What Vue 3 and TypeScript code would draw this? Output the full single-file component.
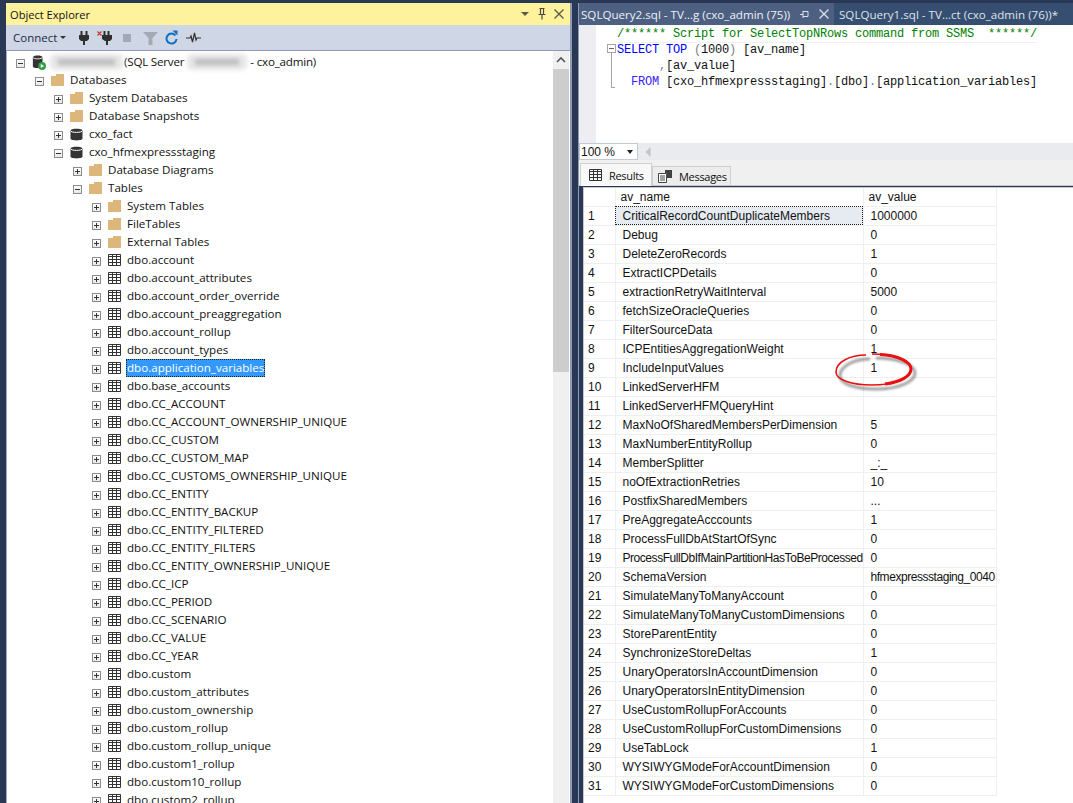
<script setup lang="ts">
type TreeKind = 'server' | 'folder' | 'db' | 'table'
interface TreeRow {
  label: string
  depth: number
  kind: TreeKind
  open?: boolean
  selected?: boolean
}

const folderRows: TreeRow[] = [
  { label: 'Databases', depth: 1, kind: 'folder', open: true },
  { label: 'System Databases', depth: 2, kind: 'folder' },
  { label: 'Database Snapshots', depth: 2, kind: 'folder' },
  { label: 'cxo_fact', depth: 2, kind: 'db' },
  { label: 'cxo_hfmexpressstaging', depth: 2, kind: 'db', open: true },
  { label: 'Database Diagrams', depth: 3, kind: 'folder' },
  { label: 'Tables', depth: 3, kind: 'folder', open: true },
  { label: 'System Tables', depth: 4, kind: 'folder' },
  { label: 'FileTables', depth: 4, kind: 'folder' },
  { label: 'External Tables', depth: 4, kind: 'folder' },
]

const tableNames = [
  'account', 'account_attributes', 'account_order_override', 'account_preaggregation',
  'account_rollup', 'account_types', 'application_variables', 'base_accounts',
  'CC_ACCOUNT', 'CC_ACCOUNT_OWNERSHIP_UNIQUE', 'CC_CUSTOM', 'CC_CUSTOM_MAP',
  'CC_CUSTOMS_OWNERSHIP_UNIQUE', 'CC_ENTITY', 'CC_ENTITY_BACKUP', 'CC_ENTITY_FILTERED',
  'CC_ENTITY_FILTERS', 'CC_ENTITY_OWNERSHIP_UNIQUE', 'CC_ICP', 'CC_PERIOD', 'CC_SCENARIO',
  'CC_VALUE', 'CC_YEAR', 'custom', 'custom_attributes', 'custom_ownership', 'custom_rollup',
  'custom_rollup_unique', 'custom1_rollup', 'custom10_rollup', 'custom2_rollup',
]

const treeRows: TreeRow[] = [
  ...folderRows,
  ...tableNames.map((n) => ({
    label: 'dbo.' + n,
    depth: 4,
    kind: 'table' as TreeKind,
    selected: n === 'application_variables',
  })),
]

const comment = '/****** Script for SelectTopNRows command from SSMS  ******/'

const results: [string, string][] = [
  ['CriticalRecordCountDuplicateMembers', '1000000'],
  ['Debug', '0'],
  ['DeleteZeroRecords', '1'],
  ['ExtractICPDetails', '0'],
  ['extractionRetryWaitInterval', '5000'],
  ['fetchSizeOracleQueries', '0'],
  ['FilterSourceData', '0'],
  ['ICPEntitiesAggregationWeight', '1'],
  ['IncludeInputValues', '1'],
  ['LinkedServerHFM', ''],
  ['LinkedServerHFMQueryHint', ''],
  ['MaxNoOfSharedMembersPerDimension', '5'],
  ['MaxNumberEntityRollup', '0'],
  ['MemberSplitter', '_:_'],
  ['noOfExtractionRetries', '10'],
  ['PostfixSharedMembers', '...'],
  ['PreAggregateAcccounts', '1'],
  ['ProcessFullDbAtStartOfSync', '0'],
  ['ProcessFullDbIfMainPartitionHasToBeProcessed', '0'],
  ['SchemaVersion', 'hfmexpressstaging_0040'],
  ['SimulateManyToManyAccount', '0'],
  ['SimulateManyToManyCustomDimensions', '0'],
  ['StoreParentEntity', '0'],
  ['SynchronizeStoreDeltas', '1'],
  ['UnaryOperatorsInAccountDimension', '0'],
  ['UnaryOperatorsInEntityDimension', '0'],
  ['UseCustomRollupForAccounts', '0'],
  ['UseCustomRollupForCustomDimensions', '0'],
  ['UseTabLock', '1'],
  ['WYSIWYGModeForAccountDimension', '0'],
  ['WYSIWYGModeForCustomDimensions', '0'],
]
</script>

<template>
  <div class="app">
    <section class="explorer">
      <header class="pane-title">
        <span>Object Explorer</span>
        <span class="title-btns">
          <svg width="12" height="12" viewBox="0 0 12 12"><path d="M2 4h8L6 8z" fill="#5a5a4a" /></svg>
          <svg width="12" height="14" viewBox="0 0 12 14"><path d="M3.500 1.500h5M4.500 1.500v6M7.500 1.500v6M2.500 7.500h7M6 7.500v5" fill="none" stroke="#4a4a3e" stroke-width="1.200" /></svg>
          <svg width="12" height="12" viewBox="0 0 12 12"><path d="M1.500 1.500l9 9M10.500 1.500l-9 9" fill="none" stroke="#5a5a4a" stroke-width="1.400" /></svg>
        </span>
      </header>
      <div class="toolbar">
        <span class="connect">Connect<i class="caret"></i></span>
        <svg class="tb-plug" width="12" height="14" viewBox="0 0 12 14"><path d="M2.500 0H4.500V4H7.500V0H9.500V4H11V8L9 10H7V14H5V10H3L1 8V4H2.500z" fill="#2f2f2f" /></svg>
        <svg class="tb-xplug" width="16" height="14" viewBox="0 0 16 14"><path d="M.5.500l4 4M4.500.5l-4 4" stroke="#c0392b" stroke-width="1.100" /><path d="M6.500 0H8.500V4H10.500V0H12.500V4H15V8L13 10H11V14H9V10H8L5 8V4H6.500z" fill="#2f2f2f" /></svg>
        <i class="stop"></i>
        <svg class="tb-filter" width="15" height="14" viewBox="0 0 15 14"><path d="M0 1h15L9.500 7v7h-4V7z" fill="#a4aab5" /></svg>
        <svg class="tb-refresh" width="13" height="15" viewBox="0 0 13 15"><path d="M10.500 5.500A5 5 0 1 0 11.500 9" fill="none" stroke="#0e70c0" stroke-width="2" /><path d="M7.500 .5h5v5z" fill="#0e70c0" /></svg>
        <svg class="tb-pulse" width="15" height="12" viewBox="0 0 15 12"><path d="M0 6h4l1-2 1.500 6 2-9 1.500 7 1-2h4" fill="none" stroke="#333" stroke-width="1.200" /></svg>
      </div>
      <div class="tree-wrap">
        <div class="tree">
          <div class="tree-row server-row">
            <i class="box minus"></i>
            <span class="icon">
              <svg width="16" height="18" viewBox="0 0 16 18">
                <path d="M1 3.500C1 1 12 1 12 3.500V14C12 16.500 1 16.500 1 14z" fill="#333" />
                <path d="M1 3.500C1 6 12 6 12 3.500" fill="none" stroke="#fff" stroke-width="1" />
                <circle cx="11.500" cy="13.500" r="4.500" fill="#2f9e44" />
                <path d="M10 11.200l3.800 2.300-3.800 2.300z" fill="#fff" />
              </svg>
            </span>
            <span class="blur b1"></span>
            <span class="label">(SQL Server</span>
            <span class="blur b2"></span>
            <span class="label">- cxo_admin)</span>
          </div>
          <div v-for="r in treeRows" :key="r.label" class="tree-row" :class="'depth' + r.depth">
            <i class="box" :class="r.open ? 'minus' : 'plus'"></i>
            <span class="icon">
              <svg v-if="r.kind === 'folder'" width="13" height="12" viewBox="0 0 13 12">
                <path d="M0 2h5V0h8v12H0z" fill="#dcb67a" />
              </svg>
              <svg v-else-if="r.kind === 'db'" width="13" height="13" viewBox="0 0 13 13">
                <path d="M.5 2.500C.5 0 12.500 0 12.500 2.500v8C12.500 13 .5 13 .5 10.500z" fill="#333" />
                <path d="M.5 2.500C.5 5 12.500 5 12.500 2.500" fill="none" stroke="#fff" />
              </svg>
              <svg v-else width="13" height="12" viewBox="0 0 13 12">
                <path d="M.5.500h12v11H.5zM.5 2.500h12M.5 5.500h12M.5 8.500h12M4.500.5v11M8.500.5v11" fill="none" stroke="#333" />
              </svg>
            </span>
            <span class="label" :class="{ selected: r.selected }">{{ r.label }}</span>
          </div>
        </div>
        <div class="scrollbar">
          <div class="sb-up"><svg width="10" height="8" viewBox="0 0 10 8"><path d="M1 6l4-4 4 4" fill="none" stroke="#555" stroke-width="1.600" /></svg></div>
          <div class="sb-thumb"></div>
        </div>
      </div>
    </section>

    <main class="query">
      <nav class="doc-tabs">
        <div class="doc-tab active">
          <span>SQLQuery2.sql - TV...g (cxo_admin (75))</span>
          <svg width="9" height="9" viewBox="0 0 9 9"><path d="M0 4.500h3M3 1v7M3 1.500h5v5H3" fill="none" stroke="#dde2ec" /></svg>
          <svg width="10" height="10" viewBox="0 0 10 10"><path d="M.5.500l9 9M9.500.5l-9 9" stroke="#dde2ec" stroke-width="1.300" /></svg>
        </div>
        <div class="doc-tab">SQLQuery1.sql - TV...ct (cxo_admin (76))*</div>
      </nav>
      <div class="editor">
        <div class="gutter"></div>
        <div class="fold">
          <i class="fold-box"></i>
          <i class="fold-line"></i>
        </div>
        <div class="code">
          <div class="line comment-line">{{ comment }}</div>
          <div class="line"><b>SELECT TOP</b> <em>(</em>1000<em>)</em> [av_name]</div>
          <div class="line indent-col"><em>,</em>[av_value]</div>
          <div class="line indent-from"><b class="from">FROM</b> [cxo_hfmexpressstaging]<em>.</em>[dbo]<em>.</em>[application_variables]</div>
        </div>
      </div>
      <div class="zoom-bar">
        <div class="zoom-combo"><span>100 %</span><i class="caret dark"></i></div>
        <svg class="zoom-left" width="6" height="10" viewBox="0 0 6 10"><path d="M5.500 0v10L.5 5z" fill="#c2c3c9" /></svg>
      </div>
      <div class="result-tabs">
        <div class="r-tab active">
          <svg width="13" height="12" viewBox="0 0 13 12"><path d="M.5.500h12v11H.5zM.5 2.500h12M.5 5.500h12M.5 8.500h12M4.500.5v11M8.500.5v11" fill="none" stroke="#333" /></svg>
          <span>Results</span>
        </div>
        <div class="r-tab">
          <svg width="15" height="14" viewBox="0 0 15 14"><path d="M.5 4.500h8v9h-8zM2 7h5M2 9h5M2 11h5" fill="#fff" stroke="#424242" /><path d="M7 1h7v8H9V4H7z" fill="#424242" /></svg>
          <span>Messages</span>
        </div>
      </div>
      <div class="grid-wrap">
        <table class="grid">
          <thead>
            <tr><th class="num"></th><th class="name">av_name</th><th class="val">av_value</th></tr>
          </thead>
          <tbody>
            <tr v-for="(r, i) in results" :key="r[0]">
              <td class="num">{{ i + 1 }}</td>
              <td class="name" :class="{ focus: i === 0, tight: r[0].length > 40 }">{{ r[0] }}</td>
              <td class="val" :class="{ tight: r[1].length > 20 }">{{ r[1] }}</td>
            </tr>
          </tbody>
        </table>
        <svg class="circle" width="95" height="50" viewBox="0 0 95 50">
          <defs>
            <filter id="soft" x="-10%" y="-20%" width="120%" height="140%"><feGaussianBlur stdDeviation="1.300" /></filter>
          </defs>
          <path d="M36 7C20 7 6 14 6 24c0 8 16 13 36 13 22 0 39-7 39-16C81 12 62 6 42 6" transform="translate(4 4)" fill="none" stroke="#555" stroke-width="3" opacity=".55" filter="url(#soft)" />
          <path d="M36 7C20 7 6 14 6 24c0 8 16 13 36 13 22 0 39-7 39-16C81 12 62 6 42 6" fill="none" stroke="#e81010" stroke-width="1.600" />
          <path d="M50 6.500c18 1 31 7 31 14.500 0 7-10 13-26 15" fill="none" stroke="#e81010" stroke-width="3" />
        </svg>
      </div>
    </main>
  </div>
</template>

<style>
html, body { margin: 0; background: #293955; overflow: hidden; }
</style>

<style scoped>
.app {
  width: 1073px;
  height: 803px;
  box-sizing: border-box;
  padding: 3px 0 0 6px;
  display: flex;
  gap: 6px;
  background: #293955;
  font-family: "Open Sans", "Noto Sans", sans-serif;
  color: #111;
  overflow: hidden;
}
.explorer {
  width: 566px;
  box-sizing: border-box;
  flex: none;
  display: flex;
  flex-direction: column;
  background: #fff;
  border-right: 2px solid #8e9bb4;
}
.pane-title {
  height: 22px;
  background: #fff29d;
  display: flex;
  align-items: center;
  justify-content: space-between;
  padding: 0 4px;
  font-size: 11.100px;
  flex: none;
}
.title-btns { display: flex; gap: 5px; align-items: center; margin-right: 1px; }
.toolbar {
  height: 26px;
  flex: none;
  box-sizing: border-box;
  background: #cfd6e5;
  border-bottom: 1px solid #8e9bbc;
  display: flex;
  align-items: center;
  padding-left: 7px;
}
.connect { font-size: 11.500px; color: #1b2a44; width: 65px; display: flex; align-items: center; }
.caret {
  display: inline-block;
  width: 0;
  height: 0;
  border: 3px solid transparent;
  border-top: 3px solid #333;
  border-bottom: 0;
  margin-left: 3px;
}
.tb-xplug { margin-left: 7px; }
.stop { width: 8px; height: 8px; background: #a4aab5; display: block; margin-left: 10px; }
.tb-filter { margin-left: 12px; }
.tb-refresh { margin-left: 7px; }
.tb-pulse { margin-left: 8px; }
.tree-wrap { flex: 1; display: flex; min-height: 0; }
.tree { flex: 1; padding-top: 2px; overflow: hidden; box-shadow: inset 1px 0 #a5aec2; }
.tree-row {
  height: 18px;
  display: flex;
  align-items: center;
  font-size: 11.600px;
  white-space: nowrap;
  padding-left: 10px;
}
.depth1 { padding-left: 29px; }
.depth2 { padding-left: 48px; }
.depth3 { padding-left: 67px; }
.depth4 { padding-left: 86px; }
.box {
  width: 7px;
  height: 7px;
  flex: none;
  border: 1px solid #8c8c8c;
  background: linear-gradient(#fff, #e8e8e8);
  position: relative;
  margin: 2px 7px 0 0;
}
.box::before {
  content: "";
  position: absolute;
  left: 1px;
  right: 1px;
  top: 3px;
  height: 1px;
  background: #333;
}
.box.plus::after {
  content: "";
  position: absolute;
  top: 1px;
  bottom: 1px;
  left: 3px;
  width: 1px;
  background: #333;
}
.icon { width: 14px; height: 18px; display: flex; align-items: center; flex: none; margin-right: 4px; }
.label { padding: 0 1px; line-height: 18px; }
.server-row .label { letter-spacing: -.2px; }
.label.selected {
  background: #3399ff;
  color: #fff;
  outline: 1px dotted #222;
  outline-offset: -1px;
}
.blur {
  display: block;
  height: 16px;
  flex: none;
  border-radius: 5px;
  filter: blur(2px);
  background: #e6e6e6;
  overflow: hidden;
}
.blur::after {
  content: "";
  display: block;
  height: 6px;
  margin: 5px 8px;
  background: #bdbdbd;
}
.b1 { width: 73px; }
.b2 { width: 60px; margin: 0 2px; }
.scrollbar {
  width: 16px;
  flex: none;
  margin-right: 1px;
  background: #f0f0f0;
  display: flex;
  flex-direction: column;
}
.sb-up { height: 18px; display: flex; align-items: center; justify-content: center; }
.sb-thumb { height: 303px; background: #cdcdcd; }
.query {
  flex: 1;
  min-width: 0;
  display: flex;
  flex-direction: column;
  box-sizing: border-box;
  border-left: 1px solid #8e9bb4;
}
.doc-tabs { height: 22px; flex: none; display: flex; align-items: center; font-size: 11.600px; white-space: nowrap; }
.doc-tab { height: 22px; display: flex; align-items: center; }
.doc-tab.active { background: #4d6082; width: 255px; flex: none; box-sizing: border-box; padding-left: 2px; color: #eef1f6; }
.doc-tab.active svg:nth-of-type(1) { margin-left: 10px; }
.doc-tab.active svg:nth-of-type(2) { margin-left: 10px; }
.doc-tab:not(.active) { color: #dfe4ee; background: #364e6f; flex: 1; padding-left: 5px; }
.editor { height: 118px; flex: none; background: #fff; display: flex; }
.gutter { width: 17px; background: #eeeef2; flex: none; }
.fold { width: 21px; flex: none; position: relative; }
.fold-box {
  position: absolute;
  left: 11px;
  top: 19px;
  width: 7px;
  height: 7px;
  border: 1px solid #a5a5a5;
}
.fold-box::after {
  content: "";
  position: absolute;
  left: 1px;
  right: 1px;
  top: 3px;
  height: 1px;
  background: #666;
}
.fold-line {
  position: absolute;
  left: 15px;
  top: 28px;
  width: 3px;
  height: 34px;
  border-left: 1px solid #a5a5a5;
  border-bottom: 1px solid #a5a5a5;
}
.code {
  font-family: "Liberation Mono", "DejaVu Sans Mono", monospace;
  font-size: 12px;
  letter-spacing: -.2px;
  color: #111;
  padding-top: 1px;
}
.line { height: 16px; line-height: 16px; white-space: pre; }
.comment-line { color: #008000; box-shadow: 0 1px #f0f0f0; }
.indent-col { padding-left: 42px; }
.indent-from { padding-left: 14px; }
.code b { color: #0000ff; font-weight: 400; }
.code b.from { color: #3a20ff; }
.code em { font-style: normal; color: #808080; }
.zoom-bar { height: 17px; flex: none; background: #e9ebef; display: flex; align-items: center; }
.zoom-combo {
  width: 59px;
  height: 17px;
  box-sizing: border-box;
  background: #fff;
  border: 1px solid #c2c8d4;
  font-family: "Liberation Sans", Arial, sans-serif;
  font-size: 12px;
  padding: 0 4px 0 1px;
  display: flex;
  align-items: center;
  justify-content: space-between;
}
.caret.dark { border-width: 4px 3px 0; border-top-color: #222; }
.zoom-left { margin-left: 7px; }
.result-tabs {
  height: 26px;
  flex: none;
  box-sizing: border-box;
  background: #f0f0f0;
  border-bottom: 1px solid #c8c8c8;
  display: flex;
  align-items: flex-end;
  padding-left: 1px;
}
.r-tab {
  height: 19px;
  box-sizing: border-box;
  padding: 0 3px 0 5px;
  display: flex;
  align-items: center;
  gap: 6px;
  border: 1px solid #d0d0d0;
  border-bottom: 0;
  font-size: 11px;
  letter-spacing: -.3px;
  background: #ececec;
}
.r-tab.active { height: 23px; width: 72px; background: #f8f8f8; padding-left: 8px; gap: 7px; margin-bottom: -1px; }
.grid-wrap {
  flex: 1;
  min-height: 0;
  margin: 1px 0 0 4px;
  position: relative;
  background: #fff;
  border-left: 1px solid #c8c8c8;
  border-top: 1px solid #c8c8c8;
}
.grid {
  border-collapse: collapse;
  table-layout: fixed;
  width: 412px;
  font-family: "Liberation Sans", Arial, sans-serif;
  font-size: 12px;
  color: #111;
}
.grid th, .grid td {
  height: 19px;
  box-sizing: border-box;
  padding: 0 0 0 7px;
  font-weight: 400;
  text-align: left;
  border-right: 1px solid #efefef;
  border-bottom: 1px solid #efefef;
  white-space: nowrap;
  overflow: hidden;
}
.grid th { height: 18px; padding-left: 5px; }
.grid .num { width: 31px; padding-left: 4px; }
.grid .name { width: 248px; }
.grid .val { width: 133px; }
.grid td.focus { background: #e6ebf1; outline: 1px dotted #222; outline-offset: -1px; }
.grid td.tight { letter-spacing: -.45px; }
.circle { position: absolute; left: 246px; top: 160px; pointer-events: none; }
</style>
